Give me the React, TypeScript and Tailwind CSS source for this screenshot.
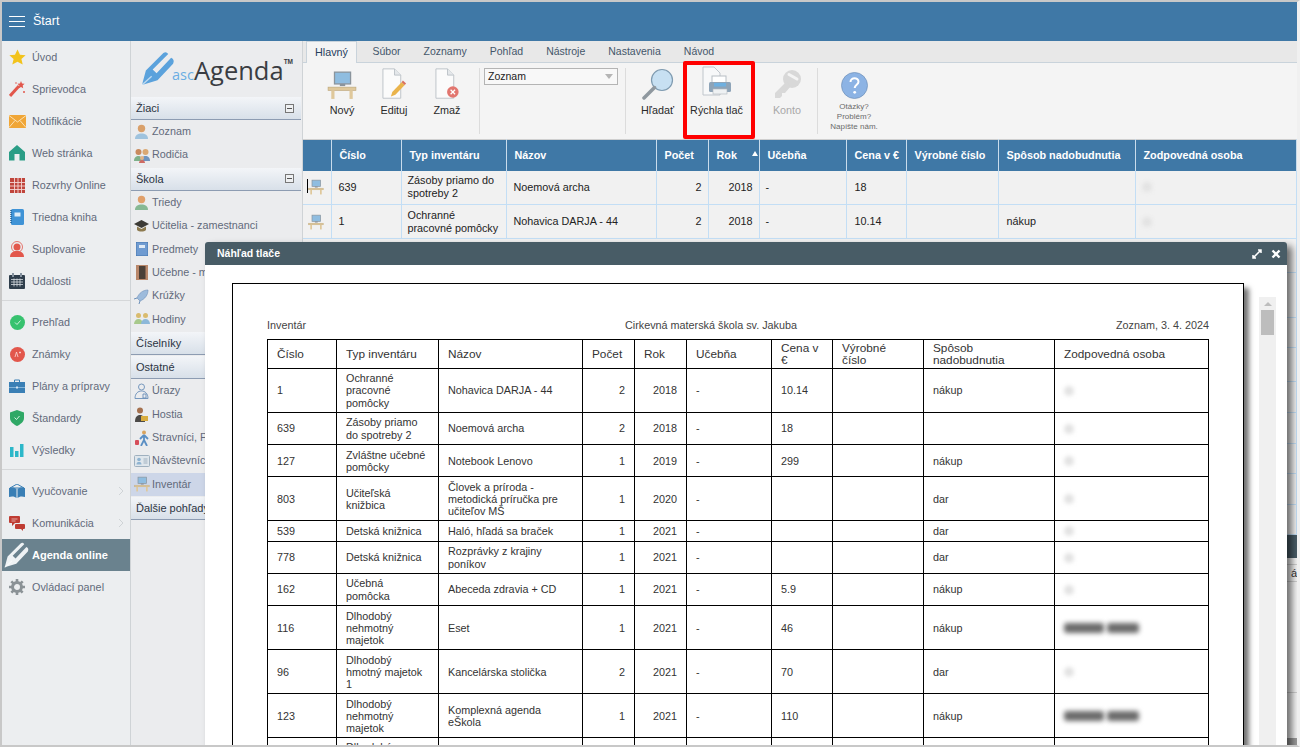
import React from "react";

const FONT = "[font-family:'Liberation_Sans',Arial,sans-serif]";

function Star() {
  return <svg width="17" height="16" viewBox="0 0 17 16"><polygon points="8.5,0.5 11,5.7 16.6,6.3 12.4,10 13.7,15.6 8.5,12.7 3.3,15.6 4.6,10 0.4,6.3 6,5.7" fill="#f2c31c" /></svg>;
}
function Wand() {
  return <svg width="17" height="16" viewBox="0 0 17 16"><path d="M1 15 L10 5" stroke="#e2574c" strokeWidth="3" /><path d="M12 0l1 2.4 2.6.4-1.9 1.8.5 2.6L12 6l-2.2 1.2.5-2.6L8.400 2.800l2.600-.4z" fill="#e2574c" /><circle cx="15" cy="11" r="1" fill="#e2574c" /><circle cx="7" cy="2" r=".8" fill="#e2574c" /></svg>;
}
function Mail() {
  return <svg width="17" height="13" viewBox="0 0 17 13"><rect width="17" height="13" fill="#f0a637" /><path d="M0 .5 L8.500 7 L17 .5 M0 12.500 L6 5.500 M17 12.500 L11 5.500" stroke="#fbe1b4" fill="none" /></svg>;
}
function House() {
  return <svg width="16" height="16" viewBox="0 0 16 16"><path d="M8 0 L16 7 V15.500 H10.500 V9 H5.500 V15.500 H0 V7 Z" fill="#2a9d86" /></svg>;
}
function Timetable() {
  return <svg width="15" height="15" viewBox="0 0 15 15"><rect width="15" height="15" fill="#c0453c" /><path d="M0 4.500H15M0 8H15M0 11.500H15M4.500 0V15M8 0V15M11.500 0V15" stroke="#f3d5d2" strokeWidth=".9" /></svg>;
}
function Book() {
  return <svg width="15" height="16" viewBox="0 0 15 16"><rect x="1" width="13" height="16" rx="1.500" fill="#3f93d6" /><rect x="4.500" y="3.500" width="6" height="4" fill="#dcecf8" /><path d="M1 1V15" stroke="#1f5f94" strokeWidth="1.500" strokeDasharray="1 1" /></svg>;
}
function Support() {
  return <svg width="16" height="16" viewBox="0 0 16 16"><circle cx="8" cy="6" r="5.500" fill="none" stroke="#e2574c" strokeWidth=".8" /><circle cx="8" cy="6" r="3.500" fill="#e2574c" /><path d="M1 16c0-4 3-6 7-6s7 2 7 6z" fill="#e2574c" /></svg>;
}
function EventCal() {
  return <svg width="16" height="16" viewBox="0 0 16 16"><rect y="2" width="16" height="14" rx="1" fill="#2f3e4c" /><path d="M2 6.500h12M2 9h12M2 11.500h12M5 5.500v8M8 5.500v8M11 5.500v8" stroke="#d5dadf" strokeWidth=".8" /><rect x="3" width="2" height="4" fill="#8693a0" /><rect x="11" width="2" height="4" fill="#8693a0" /></svg>;
}
function CircleIcon({ color, kind }: { color: string; kind: "check" | "a" }) {
  return <svg width="15" height="15" viewBox="0 0 15 15"><circle cx="7.500" cy="7.500" r="7.500" fill={color} />{kind === "check" ? <path d="M5 7.500l2 2 3.500-4" stroke="#cdf1dc" fill="none" /> : <path d="M5 10l1.500-5 1.500 5M9 5.500h2M10 4.500v2" stroke="#fbdcd9" fill="none" strokeWidth=".8" />}</svg>;
}
function Brief() {
  return <svg width="16" height="14" viewBox="0 0 16 14"><path d="M5.500 3V1h5v2" stroke="#3a7fb5" fill="none" /><rect y="3" width="16" height="11" fill="#3a7fb5" /><path d="M0 8.500h16" stroke="#a5cbe6" strokeWidth=".7" /><rect x="7" y="7.500" width="2" height="2" fill="#d5e6f3" /></svg>;
}
function Shield() {
  return <svg width="14" height="16" viewBox="0 0 14 16"><path d="M7 0 L14 2.500 V8 C14 12 10 14.500 7 16 C4 14.500 0 12 0 8 V2.500 Z" fill="#2fa866" /><path d="M4.500 7.500l2 2 3-3.500" stroke="#d5f2e2" fill="none" /></svg>;
}
function Bars() {
  return <svg width="14" height="14" viewBox="0 0 14 14"><rect y="4" width="3.500" height="10" fill="#2cb7c9" /><rect x="5" y="8" width="3.500" height="6" fill="#2cb7c9" /><rect x="10" y="1" width="3.500" height="13" fill="#2cb7c9" /></svg>;
}
function OpenBook() {
  return <svg width="16" height="14" viewBox="0 0 16 14"><path d="M8 0 L15 4 H1 Z" fill="none" stroke="#3a7fb5" /><path d="M0 4 C3 3 6 3.500 7.500 5 V14 C6 12.500 3 12 0 13 Z M16 4 C13 3 10 3.500 8.500 5 V14 C10 12.500 13 12 16 13 Z" fill="#3a7fb5" /></svg>;
}
function Chat() {
  return <svg width="16" height="15" viewBox="0 0 16 15"><path d="M1 0h9a1 1 0 0 1 1 1v5a1 1 0 0 1-1 1H6L3 10V7H1a1 1 0 0 1-1-1V1a1 1 0 0 1 1-1z" fill="#bf3c33" /><path d="M7 8h8a1 1 0 0 1 1 1v3a1 1 0 0 1-1 1h-1v2l-2-2H7a1 1 0 0 1-1-1V9a1 1 0 0 1 1-1z" fill="#bf3c33" /><path d="M2.500 3h6M2.500 5h4" stroke="#ecc3c0" strokeWidth=".8" /></svg>;
}
function Pen({ color, size }: { color: string; size: number }) {
  return (
    <svg width={size} height={size} viewBox="0 0 36 36">
      <path d="M1 35 L5 20 L23 2 Q26 0 28 3 L12 19 L16 23 L31 7 Q35 9 33 13 L17 30 Z" fill={color} />
      <path d="M1 35 L11 26" stroke="#ffffff" strokeOpacity=".6" strokeWidth="1.500" />
    </svg>
  );
}
function Gear() {
  return (
    <svg width="16" height="16" viewBox="0 0 16 16">
      <circle cx="8" cy="8" r="4.500" fill="none" stroke="#8b9296" strokeWidth="3" />
      <path d="M8 0v16M0 8h16M2.300 2.300l11.400 11.400M13.700 2.300L2.300 13.700" stroke="#8b9296" strokeWidth="2.600" strokeDasharray="3 10" />
    </svg>
  );
}
function Desk({ size = 16 }: { size?: number }) {
  return (
    <svg width={size} height={size} viewBox="0 0 28 28">
      <rect x="7" y="2" width="15" height="11" fill="#8fbde0" stroke="#8a949c" strokeWidth="1.200" />
      <rect x="12" y="13" width="5" height="2" fill="#8a949c" />
      <rect x="1" y="16" width="26" height="3" fill="#dfc89b" stroke="#bda678" strokeWidth=".6" />
      <rect x="4" y="19" width="3" height="8" fill="#dfc89b" />
      <rect x="21" y="19" width="3" height="8" fill="#dfc89b" />
    </svg>
  );
}
function Person({ c = "#d9a06b", b = "#9fc3de" }: { c?: string; b?: string }) {
  return <svg width="15" height="15" viewBox="0 0 15 15"><circle cx="7.500" cy="4.500" r="3.700" fill={c} /><path d="M1 15c0-4 3-5.500 6.500-5.500S14 11 14 15z" fill={b} /></svg>;
}
function Parents() {
  return <svg width="16" height="15" viewBox="0 0 16 15"><circle cx="4.500" cy="4" r="3" fill="#c98a5e" /><path d="M0 13c0-3.500 2-5 4.500-5S8 9.500 8 13z" fill="#7fb08a" /><circle cx="11.500" cy="4" r="3" fill="#dba873" /><path d="M7 13c0-3.500 2-5 4.500-5S16 9.500 16 13z" fill="#6f94bf" /><circle cx="8" cy="10" r="2" fill="#e2b48a" /><path d="M5 15c0-2 1.500-3 3-3s3 1 3 3z" fill="#cf6b64" /></svg>;
}
function Cap() {
  return <svg width="15" height="15" viewBox="0 0 15 15"><path d="M7.500 2 L15 6 L7.500 10 L0 6 Z" fill="#3c3a35" /><path d="M3 8.500V12c2 2 7 2 9 0V8.500L7.500 11z" fill="#8d7a4f" /></svg>;
}
function Subject() {
  return <svg width="12" height="14" viewBox="0 0 12 14"><rect width="12" height="14" fill="#6f9bd1" stroke="#3f6ea8" strokeWidth=".8" /><rect x="3" y="3" width="6" height="3" fill="#dfeaf6" /></svg>;
}
function Door() {
  return <svg width="12" height="15" viewBox="0 0 12 15"><rect width="12" height="15" fill="#b9876a" /><rect x="3" y="1" width="6.500" height="13" fill="#4b4038" /></svg>;
}
function Rocket() {
  return <svg width="15" height="15" viewBox="0 0 15 15"><path d="M14 1 C9 1 5 4 3 9 L6 12 C11 10 14 6 14 1 Z" fill="#9dbbdc" stroke="#6d8fb8" strokeWidth=".6" /><path d="M3 9 L0 10 M6 12 L5 15" stroke="#6d8fb8" /></svg>;
}
function Hours() {
  return <svg width="16" height="14" viewBox="0 0 16 14"><circle cx="4.500" cy="3.500" r="2.500" fill="#d9bb6e" /><circle cx="11.500" cy="3.500" r="2.500" fill="#d9bb6e" /><path d="M0 12c0-3 2-5 4.500-5S9 9 9 12z" fill="#a8c98c" /><path d="M7 12c0-3 2-5 4.500-5S16 9 16 12z" fill="#8db8d9" /></svg>;
}
function Injury() {
  return <svg width="15" height="16" viewBox="0 0 15 16" fill="none" stroke="#6a8fb8" strokeWidth=".9"><circle cx="7.500" cy="4" r="3" /><path d="M1 15.500c0-5 3-7.500 6.500-7.500S14 10.500 14 15.500zM9 11h3v4H9z" /></svg>;
}
function Guest() {
  return <svg width="13" height="15" viewBox="0 0 13 15"><circle cx="5" cy="3.500" r="3" fill="#a5714f" /><path d="M0 15c0-5 2-7 5-7s5 2 5 7z" fill="#4c4a48" /><rect x="6" y="9" width="7" height="5" fill="#d9ad3f" /></svg>;
}
function Traveler() {
  return <svg width="16" height="16" viewBox="0 0 16 16"><circle cx="10" cy="2.500" r="2" fill="#d9a45f" /><path d="M10 5 L6 9 M10 5 L14 9 M10 5 V10 L7 16 M10 10 L13 16" stroke="#5b8fc4" strokeWidth="1.800" fill="none" /><rect x="1" y="10" width="4" height="5" rx="1" fill="#d64e5a" /></svg>;
}
function VisitorCard() {
  return <svg width="16" height="12" viewBox="0 0 16 12"><rect x=".5" y=".5" width="15" height="11" rx="1" fill="#dfe6ec" stroke="#9fb0bf" /><circle cx="5" cy="4.500" r="1.800" fill="#8fb3d1" /><path d="M2.500 9.500c0-2 1-2.500 2.500-2.500s2.500.5 2.500 2.500z" fill="#8fb3d1" /><path d="M9.500 4h4M9.500 6h4M9.500 8h4" stroke="#9fb0bf" /></svg>;
}
function Magnifier() {
  return <svg width="32" height="32" viewBox="0 0 32 32"><circle cx="20" cy="12" r="10.500" fill="#c7e0f2" stroke="#7f9bb0" strokeWidth="1.200" /><path d="M12.500 19.500 L2 30" stroke="#8f989f" strokeWidth="3.500" strokeLinecap="round" /></svg>;
}
function DocIcon() {
  return <path d="M1 1h13l7 7v26H1z" fill="#fbfbfb" stroke="#b9c0c6" />;
}
function EditDoc() {
  return <svg width="25" height="32" viewBox="0 0 28 36"><DocIcon /><path d="M14 1v7h7" fill="#e4e7ea" stroke="#b9c0c6" /><path d="M10 32 L11.500 27 L22 16 L25.500 19 L15 30 Z" fill="#eab44c" /><path d="M22 16 L25.500 19 L27 17.500 L23.500 14 Z" fill="#d9705f" /></svg>;
}
function DeleteDoc() {
  return <svg width="25" height="32" viewBox="0 0 28 36"><DocIcon /><path d="M14 1v7h7" fill="#e4e7ea" stroke="#b9c0c6" /><circle cx="20" cy="27" r="6.500" fill="#e2766f" /><path d="M17.500 24.500l5 5M22.500 24.500l-5 5" stroke="#fff" strokeWidth="1.400" /></svg>;
}
function PrintIcon() {
  return (
    <svg width="30" height="34" viewBox="0 0 30 34">
      <path d="M1 1h11l6 6v22H1z" fill="#f7f8f9" stroke="#c0c6cc" />
      <rect x="10" y="10" width="14" height="8" fill="#fff" stroke="#b7bec4" />
      <rect x="7" y="16" width="22" height="10" rx="1.500" fill="#8ea4b8" />
      <rect x="12" y="17" width="12" height="3.500" fill="#6fb0e0" />
      <rect x="11" y="23" width="14" height="5" fill="#eef1f3" stroke="#aeb6bd" strokeWidth=".6" />
    </svg>
  );
}
function KeyIcon() {
  return (
    <svg width="30" height="32" viewBox="0 0 30 32">
      <circle cx="20" cy="11" r="9" fill="#d8d8d8" />
      <path d="M14 14 L3 25 L3 30 L8 30 L10 28 L10 25 L13 25 L19 18" fill="#d8d8d8" />
      <path d="M17 6.500 L25 11" stroke="#f4f4f4" strokeWidth="3" strokeLinecap="round" />
    </svg>
  );
}
function Help() {
  return (
    <svg width="27" height="27" viewBox="0 0 27 27">
      <circle cx="13.500" cy="13.500" r="13" fill="#8cb3e4" stroke="#6f8fb8" strokeWidth=".7" />
      <path d="M9.500 10c0-2.500 2-3.800 4-3.800s4 1.300 4 3.500c0 3-3.800 3-3.800 6.300" fill="none" stroke="#fff" strokeWidth="2" />
      <circle cx="13.700" cy="20.300" r="1.400" fill="#fff" />
    </svg>
  );
}

const railTop = [
  [<Star />, "Úvod"], [<Wand />, "Sprievodca"], [<Mail />, "Notifikácie"], [<House />, "Web stránka"],
  [<Timetable />, "Rozvrhy Online"], [<Book />, "Triedna kniha"], [<Support />, "Suplovanie"], [<EventCal />, "Udalosti"],
] as const;
const railMid = [
  [<CircleIcon color="#37c26f" kind="check" />, "Prehľad"], [<CircleIcon color="#e2574c" kind="a" />, "Známky"],
  [<Brief />, "Plány a prípravy"], [<Shield />, "Štandardy"], [<Bars />, "Výsledky"],
] as const;

function RailItem({ icon, label, arrow }: { icon: React.ReactNode; label: string; arrow?: boolean }) {
  return (
    <div className="h-[32px] flex items-center relative">
      <div className="w-[30px] flex justify-center shrink-0">{icon}</div>
      <span className="text-[10.800px] text-[#626a7b] whitespace-nowrap">{label}</span>
      {arrow && (
        <svg className="absolute left-[116px] top-[11px]" width="6" height="10" viewBox="0 0 6 10"><path d="M1 1l4 4-4 4" fill="none" stroke="#cfd3d6" /></svg>
      )}
    </div>
  );
}
function Rail() {
  return (
    <div className="w-[129px] shrink-0 bg-[#eceef0] border-r border-[#cfd3d6]">
      {railTop.map(([i, l]) => <RailItem key={l} icon={i} label={l} />)}
      <div className="h-[9px] pt-[3px]"><div className="h-[1px] bg-[#d5d7d9]" /></div>
      {railMid.map(([i, l]) => <RailItem key={l} icon={i} label={l} />)}
      <div className="h-[9px] pt-[3px]"><div className="h-[1px] bg-[#d5d7d9]" /></div>
      <RailItem icon={<OpenBook />} label="Vyučovanie" arrow />
      <RailItem icon={<Chat />} label="Komunikácia" arrow />
      <div className="h-[32px] bg-[#6a828e] flex items-center relative">
        <div className="w-[30px] flex justify-center shrink-0"><Pen color="#eef2f4" size={26} /></div>
        <span className="text-[11px] font-bold text-white whitespace-nowrap">Agenda online</span>
      </div>
      <RailItem icon={<Gear />} label="Ovládací panel" />
    </div>
  );
}

function GroupHeader({ label, toggle }: { label: string; toggle?: boolean }) {
  return (
    <div className="h-[23px] mt-[1px] flex items-center justify-between pl-[5px] pr-[7px] bg-gradient-to-b from-[#f3f5f8] to-[#d8e0e9] border-b border-[#8d9cb2] mr-[1px] shrink-0">
      <span className="text-[11px] text-[#2b3442] whitespace-nowrap">{label}</span>
      {toggle && (
        <span className="w-[9px] h-[9px] border border-[#777] bg-[#eef0f2] flex items-center justify-center">
          <span className="w-[5px] h-[1px] bg-[#555]" />
        </span>
      )}
    </div>
  );
}
function NavItem({ icon, label, active }: { icon: React.ReactNode; label: string; active?: boolean }) {
  return (
    <div className={`h-[23.400px] flex items-center ${active ? "bg-[#cdd6e8]" : ""}`}>
      <div className="w-[21px] flex justify-center shrink-0">{icon}</div>
      <span className="text-[10.800px] -mt-[1px] text-[#626a7b] whitespace-nowrap">{label}</span>
    </div>
  );
}
function SecondNav() {
  return (
    <div className="w-[172px] shrink-0 bg-[#ebecee] border-r border-[#cfd3d6] overflow-hidden">
      <div className="h-[55px] flex items-center pl-[10px]">
        <Pen color="#5ba2dc" size={35} />
        <div className="flex items-baseline -ml-[4px] mt-[3px]">
          <span className="text-[14.500px] text-[#6aaee3] [font-family:'Open_Sans',sans-serif]">asc</span>
          <span className="text-[25.500px] leading-[32px] text-[#3a3d42] [font-family:'Open_Sans',sans-serif]">Agenda</span>
          <span className="text-[6.500px] font-bold text-[#3a3d42] self-start mt-[3px]">TM</span>
        </div>
      </div>
      <GroupHeader label="Žiaci" toggle />
      <NavItem icon={<Person />} label="Zoznam" />
      <NavItem icon={<Parents />} label="Rodičia" />
      <GroupHeader label="Škola" toggle />
      <NavItem icon={<Person c="#e0a06b" b="#86b894" />} label="Triedy" />
      <NavItem icon={<Cap />} label="Učitelia - zamestnanci" />
      <NavItem icon={<Subject />} label="Predmety" />
      <NavItem icon={<Door />} label="Učebne - miestnosti" />
      <NavItem icon={<Rocket />} label="Krúžky" />
      <NavItem icon={<Hours />} label="Hodiny" />
      <GroupHeader label="Číselníky" />
      <GroupHeader label="Ostatné" />
      <NavItem icon={<Injury />} label="Úrazy" />
      <NavItem icon={<Guest />} label="Hostia" />
      <NavItem icon={<Traveler />} label="Stravníci, Personál" />
      <NavItem icon={<VisitorCard />} label="Návštevníci" />
      <NavItem icon={<Desk />} label="Inventár" active />
      <GroupHeader label="Ďalšie pohľady" />
    </div>
  );
}

const tabs = ["Súbor", "Zoznamy", "Pohľad", "Nástroje", "Nastavenia", "Návod"];
function ToolButton({ icon, label, w, dim }: { icon: React.ReactNode; label: string; w: string; dim?: boolean }) {
  return (
    <div className={`${w} shrink-0 flex flex-col items-center pt-[4px]`}>
      <div className="h-[33px] flex items-end justify-center">{icon}</div>
      <span className={`mt-[3px] text-[10.800px] leading-[14px] whitespace-nowrap ${dim ? "text-[#a8a8a8]" : "text-[#2a2a2a]"}`}>{label}</span>
    </div>
  );
}
function Sep() {
  return <div className="w-[1px] h-[66px] mt-[5px] bg-[#dcdcdc] shrink-0" />;
}
function Ribbon() {
  return (
    <div className="shrink-0">
      <div className="h-[22px] bg-[#e8e8e8] flex items-end pl-[3px] border-b border-[#c9d3db]">
        <div className="h-[22px] w-[51px] -mb-[1px] bg-[#f4f4f4] border border-b-0 border-[#c9d3db] flex items-center justify-center text-[10.800px] text-[#27405c]">Hlavný</div>
        <div className="flex h-[21px] ml-[4px] items-center text-[10.500px] text-[#44566a]">
          {tabs.map((t) => <span key={t} className="px-[11.500px] whitespace-nowrap">{t}</span>)}
        </div>
      </div>
      <div className="h-[76px] bg-[#f4f4f4] flex relative">
        <div className="w-[14px] shrink-0" />
        <ToolButton icon={<Desk size={30} />} label="Nový" w="w-[50px]" />
        <ToolButton icon={<EditDoc />} label="Edituj" w="w-[54px]" />
        <ToolButton icon={<DeleteDoc />} label="Zmaž" w="w-[52px]" />
        <div className="w-[6px] shrink-0" />
        <Sep />
        <div className="w-[4px] shrink-0" />
        <div className="w-[134px] h-[17px] mt-[5px] shrink-0 bg-[#f8f8f8] border border-[#b4b4b4] flex items-center justify-between pl-[3px] pr-[4px]">
          <span className="text-[10.500px] text-[#222]">Zoznam</span>
          <span className="w-0 h-0 border-x-[4px] border-x-transparent border-t-[5px] border-t-[#b5b5b5]" />
        </div>
        <div className="w-[7px] shrink-0" />
        <Sep />
        <ToolButton icon={<Magnifier />} label="Hľadať" w="w-[63px]" />
        <ToolButton icon={<PrintIcon />} label="Rýchla tlač" w="w-[55px]" />
        <div className="w-[20px] shrink-0" />
        <ToolButton icon={<KeyIcon />} label="Konto" w="w-[46px]" dim />
        <div className="w-[7px] shrink-0" />
        <Sep />
        <div className="w-[72px] shrink-0 flex flex-col items-center pt-[9px]">
          <Help />
          <div className="mt-[3px] text-[8px] leading-[10px] text-[#6b6b6b] text-center">Otázky?<br />Problém?<br />Napíšte nám.</div>
        </div>
        <div className="absolute left-[380px] top-[-2px] w-[72px] h-[78px] border-[4px] border-[#ff0000] rounded-[2px]" />
      </div>
    </div>
  );
}

const gridCols = [28, 70, 105, 150, 52, 51, 87, 60, 92, 137, 161];
const gridHead = ["", "Číslo", "Typ inventáru", "Názov", "Počet", "Rok", "Učebňa", "Cena v €", "Výrobné číslo", "Spôsob nadobudnutia", "Zodpovedná osoba"];
const bgRowHeights = [34, 45, 30, 34, 31, 31, 30, 31, 30, 30, 30, 30, 30, 30];

function LightBlur() {
  return <div className="w-[10px] h-[10px] rounded-full bg-[#e2e2e2] blur-[2px]" />;
}
function DarkBlur() {
  return (
    <div className="flex gap-[3px]">
      <div className="w-[40px] h-[10px] rounded-[3px] bg-[#6a6a6a] blur-[2.500px]" />
      <div className="w-[32px] h-[10px] rounded-[3px] bg-[#6a6a6a] blur-[2.500px]" />
    </div>
  );
}

function GridRow({ num, type, name, cena, sposob, cursor }: { num: string; type: React.ReactNode; name: string; cena: string; sposob: string; cursor?: boolean }) {
  const td = "border-r border-b border-[#c3def5] text-[10.800px] leading-[13px] text-[#222] px-[6px] align-middle";
  return (
    <tr className="h-[34px] bg-[#f1f1f1]">
      <td className={`${td} !px-0`}><div className="flex justify-center pr-[2px] relative">{cursor && <span className="absolute left-[4px] top-0 w-[1px] h-[14px] bg-black" />}<Desk /></div></td>
      <td className={`${td} !pl-[7px]`}>{num}</td>
      <td className={td}>{type}</td>
      <td className={`${td} !pl-[7px]`}>{name}</td>
      <td className={`${td} text-right`}>2</td>
      <td className={`${td} text-right`}>2018</td>
      <td className={td}>-</td>
      <td className={`${td} !pl-[8px]`}>{cena}</td>
      <td className={td}></td>
      <td className={`${td} !pl-[8px]`}>{sposob}</td>
      <td className={td}><LightBlur /></td>
    </tr>
  );
}
function MainGrid() {
  return (
    <div className="flex-1 bg-[#f4f4f4] overflow-hidden">
      <table className="table-fixed border-collapse w-[993px] border-t border-[#cfcfcf]">
        <colgroup>{gridCols.map((w, i) => <col key={i} style={{ width: w }} />)}</colgroup>
        <thead>
          <tr className="h-[31px] bg-[#3f78a6]">
            {gridHead.map((h, i) => (
              <th key={i} className="relative border-r border-[#c9dcec] text-left align-middle pl-[8px] text-[10.800px] font-bold text-white whitespace-nowrap">
                {h}
                {h === "Rok" && <span className="absolute right-[1px] top-[11px] w-0 h-0 border-x-[3.500px] border-x-transparent border-b-[5px] border-b-white" />}
              </th>
            ))}
          </tr>
        </thead>
        <tbody>
          <GridRow num="639" type={<>Zásoby priamo do<br />spotreby 2</>} name="Noemová archa" cena="18" sposob="" cursor />
          <GridRow num="1" type={<>Ochranné<br />pracovné pomôcky</>} name="Nohavica DARJA - 44" cena="10.14" sposob="nákup" />
          {bgRowHeights.map((h, i) => (
            <tr key={i} style={{ height: h }} className="bg-[#f1f1f1]">
              <td colSpan={11} className="border-r border-b border-[#c3def5]" />
            </tr>
          ))}
        </tbody>
      </table>
    </div>
  );
}

type Row = { h: string; c: string[]; blur?: boolean; nudge?: boolean };
const printRows: Row[] = [
  { h: "h-[44px]", c: ["1", "Ochranné pracovné pomôcky", "Nohavica DARJA - 44", "2", "2018", "-", "10.14", "", "nákup"] },
  { h: "h-[32px]", c: ["639", "Zásoby priamo do spotreby 2", "Noemová archa", "2", "2018", "-", "18", "", ""] },
  { h: "h-[32px]", nudge: true, c: ["127", "Zvláštne učebné pomôcky", "Notebook Lenovo", "1", "2019", "-", "299", "", "nákup"] },
  { h: "h-[44px]", nudge: true, c: ["803", "Učiteľská knižbica", "Človek a príroda - metodická príručka pre učiteľov MŠ", "1", "2020", "-", "", "", "dar"] },
  { h: "h-[21px]", c: ["539", "Detská knižnica", "Haló, hľadá sa braček", "1", "2021", "-", "", "", "dar"] },
  { h: "h-[32px]", c: ["778", "Detská knižnica", "Rozprávky z krajiny poníkov", "1", "2021", "-", "", "", "dar"] },
  { h: "h-[32px]", c: ["162", "Učebná pomôcka", "Abeceda zdravia + CD", "1", "2021", "-", "5.9", "", "nákup"] },
  { h: "h-[44px]", nudge: true, c: ["116", "Dlhodobý nehmotný majetok", "Eset", "1", "2021", "-", "46", "", "nákup"], blur: true },
  { h: "h-[44px]", nudge: true, c: ["96", "Dlhodobý hmotný majetok 1", "Kancelárska stolička", "2", "2021", "-", "70", "", "dar"] },
  { h: "h-[44px]", nudge: true, c: ["123", "Dlhodobý nehmotný majetok", "Komplexná agenda eŠkola", "1", "2021", "-", "110", "", "nákup"], blur: true },
  { h: "h-[44px]", c: ["", "Dlhodobý nehmotný majetok", "", "", "", "", "", "", ""] },
];
const printCols = [69, 102, 144, 52, 52, 85, 61, 91, 131, 154];
const printHead: React.ReactNode[] = ["Číslo", "Typ inventáru", "Názov", "Počet", "Rok", "Učebňa", "Cena v €", <>Výrobné<br />číslo</>, "Spôsob nadobudnutia", "Zodpovedná osoba"];

function PrintTable() {
  const cell = "border border-black px-[9px] py-0 align-middle text-[10.800px] leading-[12.300px] text-[#333]";
  return (
    <table className="table-fixed border-collapse w-[941px]">
      <colgroup>{printCols.map((w, i) => <col key={i} style={{ width: w }} />)}</colgroup>
      <thead>
        <tr className="h-[29px]">
          {printHead.map((h, i) => (
            <th key={i} className={`${cell} font-normal text-left !text-[11.800px]`}>{h}</th>
          ))}
        </tr>
      </thead>
      <tbody>
        {printRows.map((r, ri) => (
          <tr key={ri} className={r.h}>
            {r.c.map((v, i) => (
              <td key={i} className={`${cell} ${r.nudge ? "pt-[1px]" : ""} ${i === 3 || i === 4 ? "text-right" : ""}`}>{v}</td>
            ))}
            <td className={cell}>{r.blur ? <DarkBlur /> : <LightBlur />}</td>
          </tr>
        ))}
      </tbody>
    </table>
  );
}

function Modal() {
  return (
    <div className="absolute left-[203px] top-[240px] w-[1082px] h-[520px] bg-white rounded-t-[3px] shadow-[5px_4px_7px_rgba(0,0,0,0.55)] overflow-hidden">
      <div className="h-[23px] bg-[#485c66] flex items-center justify-between pl-[12px] pr-[6px]">
        <span className="text-[10.500px] font-bold text-white">Náhľad tlače</span>
        <div className="flex items-center gap-[9px]">
          <svg width="10" height="10" viewBox="0 0 10 10"><path d="M1 9l8-8M6 1h3v3M1 6v3h3" stroke="#fff" strokeWidth="1.500" fill="none" /></svg>
          <svg width="10" height="10" viewBox="0 0 10 10"><path d="M1.500 1.500l7 7M8.500 1.500l-7 7" stroke="#fff" strokeWidth="2.400" /></svg>
        </div>
      </div>
      <div className="relative">
        <div className="absolute left-[1054px] top-[14px] w-[17px] h-[500px] bg-[#f0f0f0]">
          <div className="mx-auto mt-[5px] w-0 h-0 border-x-[4px] border-x-transparent border-b-[4px] border-b-[#bdbdbd]" />
          <div className="mx-auto mt-[4px] w-[13px] h-[25px] bg-[#bdbdbd]" />
        </div>
        <div className="ml-[27px] mt-[18px] w-[1012px] h-[480px] bg-white border border-black shadow-[5px_5px_5px_rgba(0,0,0,0.55)] pl-[34px] pt-[35px]">
          <div className="flex text-[10.800px] leading-[12px] text-[#444] w-[942px] h-[20px]">
            <span className="w-[358px] shrink-0">Inventár</span>
            <span>Cirkevná materská škola sv. Jakuba</span>
            <span className="ml-auto">Zoznam, 3. 4. 2024</span>
          </div>
          <PrintTable />
        </div>
      </div>
    </div>
  );
}

function BehindWindow() {
  return (
    <div className="absolute left-[1000px] top-[533px] w-[295px] h-[210px] bg-[#f4f4f4]">
      <div className="h-[23px] bg-[#485c66]" />
      <div className="h-[7px] border-b border-[#cfcfcf]" />
      <div className="h-[17px] border-b border-[#cfcfcf] text-right text-[11px] leading-[16px] text-[#333]">á</div>
      <div className="h-[111px] border-b border-[#cfcfcf]" />
      <div className="h-[45px]" />
      <div className="h-[7px] bg-[#9a9a9a]" />
    </div>
  );
}

export default function App() {
  return (
    <div className={`${FONT} w-[1300px] h-[747px] relative overflow-hidden bg-white border-t-2 border-l-2 border-b-2 border-r-[3px] border-t-[#c8c8c8] border-l-[#c8c8c8] border-b-[#c8c8c8] border-r-[#f0f0f0] flex flex-col`}>
      <div className="h-[39px] shrink-0 bg-[#3f78a6] flex items-center pl-[7px]">
        <div className="w-[16px] flex flex-col gap-[3.500px]">
          <span className="h-[1.500px] bg-white" />
          <span className="h-[1.500px] bg-white" />
          <span className="h-[1.500px] bg-white" />
        </div>
        <span className="ml-[8px] text-[12.500px] text-white">Štart</span>
      </div>
      <div className="flex-1 flex min-h-0">
        <Rail />
        <SecondNav />
        <div className="flex-1 flex flex-col min-w-0">
          <Ribbon />
          <MainGrid />
        </div>
      </div>
      <BehindWindow />
      <Modal />
    </div>
  );
}
